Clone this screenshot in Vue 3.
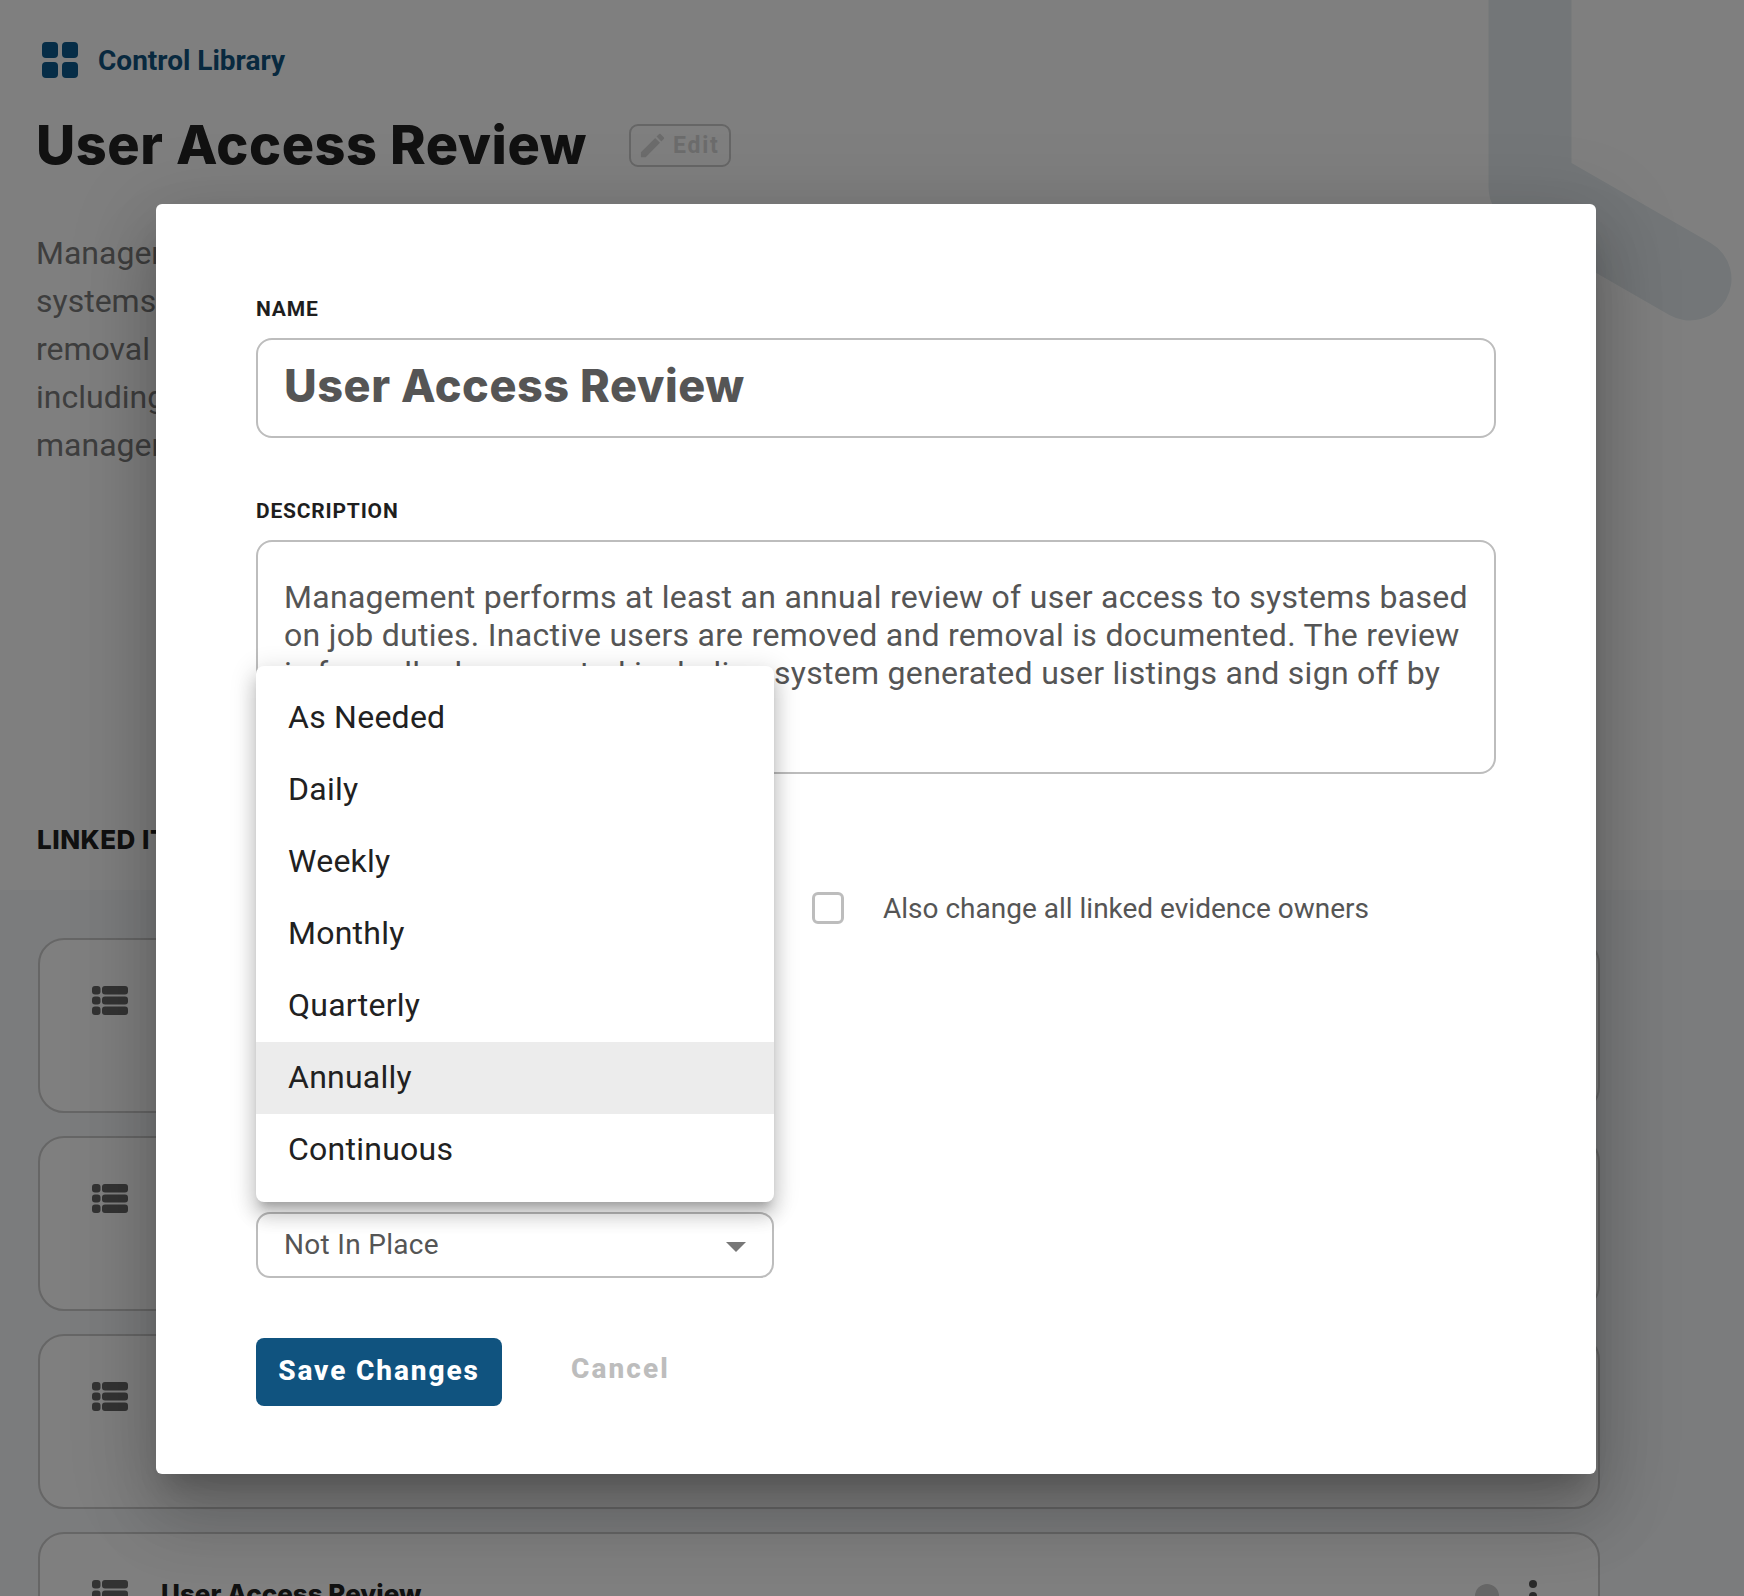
<script setup>
const descLines = ['Management performs at least an annual review of user access to', 'systems based on job duties.', 'removal is documented.', 'including system generated user listings.', 'management.']
const cards = [1, 2, 3, 4]
const options = ['As Needed', 'Daily', 'Weekly', 'Monthly', 'Quarterly', 'Annually', 'Continuous']
</script>

<template>
  <div class="page">
    <svg class="decor" width="1744" height="400" viewBox="0 0 1744 400">
      <polyline points="1530,-60 1530,187 1690,279" fill="none" stroke="#e6edf0" stroke-width="83" stroke-linecap="round" stroke-linejoin="round" />
    </svg>
    <header class="top">
      <div class="crumb">
        <div class="grid-icon"><i></i><i></i><i></i><i></i></div>
        <span>Control Library</span>
      </div>
      <div class="title-row">
        <h1>User Access Review</h1>
        <div class="edit">
          <svg width="31" height="31" viewBox="0 0 24 24"><path fill="currentColor" d="M3 17.25V21h3.75L17.81 9.94l-3.75-3.75L3 17.25zM20.71 7.04c.39-.39.39-1.02 0-1.41l-2.34-2.34c-.39-.39-1.02-.39-1.41 0l-1.83 1.83 3.75 3.75 1.83-1.83z" /></svg>
          <span>Edit</span>
        </div>
      </div>
      <div class="desc">
        <div v-for="line in descLines" :key="line">{{ line }}</div>
      </div>
      <div class="linked">LINKED ITEMS</div>
    </header>
    <section class="list">
      <div v-for="c in cards" :key="c" class="card">
        <svg class="list-icon" width="36" height="29" viewBox="0 0 36 29">
          <g fill="currentColor">
            <rect x="0" y="0" width="8.5" height="8.5" rx="3" />
            <rect x="0" y="10.5" width="8.5" height="8" rx="3" />
            <rect x="0" y="20.5" width="8.5" height="8.5" rx="3" />
            <rect x="10" y="0" width="26" height="8.5" rx="3" />
            <rect x="10" y="10.5" width="26" height="8" rx="3" />
            <rect x="10" y="20.5" width="26" height="8.5" rx="3" />
          </g>
        </svg>
        <div class="card-title">User Access Review</div>
        <div class="avatar"></div>
        <div class="dots"><i></i><i></i><i></i></div>
      </div>
    </section>

    <div class="overlay">
      <div class="modal">
        <div class="label">NAME</div>
        <div class="name-field">User Access Review</div>
        <div class="label label-desc">DESCRIPTION</div>
        <div class="desc-field">Management performs at least an annual review of user access to systems based on job duties. Inactive users are removed and removal is documented. The review is formally documented including system generated user listings and sign off by management.</div>
        <div class="check-row">
          <div class="check"></div>
          <span>Also change all linked evidence owners</span>
        </div>
        <div class="select">
          <span>Not In Place</span>
          <div class="caret"></div>
        </div>
        <div class="actions">
          <div class="save">Save Changes</div>
          <div class="cancel">Cancel</div>
        </div>
        <div class="menu">
          <div v-for="o in options" :key="o" class="opt" :class="{ active: o === 'Annually' }">{{ o }}</div>
        </div>
      </div>
    </div>
  </div>
</template>

<style>
html, body { margin: 0; padding: 0; background: #fff; }
</style>

<style scoped>
.page {
  position: relative;
  width: 1744px;
  height: 1596px;
  overflow: hidden;
  background: #fff;
  font-family: Roboto, "Liberation Sans", sans-serif;
}
.decor { position: absolute; left: 0; top: 0; }
.top {
  position: relative;
  height: 890px;
  box-sizing: border-box;
  padding: 42px 0 0 36px;
}
.crumb {
  display: flex;
  align-items: center;
  gap: 20px;
  margin-left: 6px;
  height: 36px;
  font-size: 28px;
  font-weight: 700;
  color: #10537f;
}
.grid-icon {
  display: grid;
  grid-template-columns: 16px 16px;
  grid-auto-rows: 16px;
  gap: 4px;
}
.grid-icon i { background: #0c5a8e; border-radius: 4px; }
.title-row {
  display: flex;
  align-items: center;
  margin-top: 37px;
  height: 60px;
}
h1 {
  margin: 0;
  font-family: Inter, Roboto, sans-serif;
  font-size: 54px;
  line-height: 60px;
  font-weight: 800;
  letter-spacing: 0.55px;
  color: #222;
  white-space: nowrap;
}
.edit {
  display: flex;
  align-items: center;
  box-sizing: border-box;
  width: 102px;
  height: 43px;
  margin-left: 42px;
  padding-left: 6px;
  gap: 5px;
  border: 2px solid #ccc;
  border-radius: 9px;
  color: #d8d8d8;
  font-size: 23px;
  font-weight: 700;
  letter-spacing: 1.8px;
}
.desc {
  margin-top: 54px;
  font-size: 32px;
  line-height: 48px;
  color: #7c7c7c;
  white-space: nowrap;
}
.linked {
  margin: 355px 0 0 1px;
  font-family: Inter, Roboto, sans-serif;
  font-size: 26px;
  line-height: 32px;
  font-weight: 800;
  letter-spacing: 0.5px;
  color: #222;
}
.list {
  height: 706px;
  box-sizing: border-box;
  padding: 48px 0 0 38px;
  background: #f6f8fa;
  display: flex;
  flex-direction: column;
  gap: 23px;
}
.card {
  display: flex;
  flex: none;
  align-items: flex-start;
  box-sizing: border-box;
  width: 1562px;
  height: 175px;
  padding: 46px 61px 0 52px;
  background: #fff;
  border: 2px solid #ccc;
  border-radius: 26px;
}
.list-icon { color: #666; flex: none; }
.card-title {
  margin: -1px 0 0 33px;
  font-family: Inter, Roboto, sans-serif;
  font-size: 26px;
  line-height: 30px;
  font-weight: 800;
  color: #222;
}
.avatar {
  width: 24px;
  height: 24px;
  margin: 4px 0 0 auto;
  border-radius: 50%;
  background: #ccc;
}
.dots {
  display: flex;
  flex-direction: column;
  gap: 4px;
  margin: 0 0 0 30px;
}
.dots i { width: 8px; height: 8px; border-radius: 50%; background: #555; }
.overlay {
  position: absolute;
  inset: 0;
  background: rgba(0, 0, 0, 0.5);
}
.modal {
  position: absolute;
  left: 156px;
  top: 204px;
  box-sizing: border-box;
  width: 1440px;
  height: 1270px;
  padding: 93px 100px 0;
  background: #fff;
  border-radius: 6px;
  box-shadow: 0 20px 27px -12px rgba(0,0,0,.2), 0 43px 68px 5px rgba(0,0,0,.14), 0 16px 82px 14px rgba(0,0,0,.12);
}
.label {
  font-size: 21px;
  line-height: 24px;
  font-weight: 700;
  letter-spacing: 0.8px;
  color: #1e1e1e;
}
.label-desc { margin-top: 61px; }
.name-field {
  box-sizing: border-box;
  height: 100px;
  margin-top: 17px;
  padding: 0 26px;
  border: 2px solid #bdbdbd;
  border-radius: 16px;
  font-family: Inter, Roboto, sans-serif;
  font-size: 45px;
  line-height: 92px;
  font-weight: 800;
  letter-spacing: 0.55px;
  color: #555;
}
.desc-field {
  box-sizing: border-box;
  height: 234px;
  margin-top: 17px;
  padding: 36px 12px 0 26px;
  border: 2px solid #bdbdbd;
  border-radius: 16px;
  font-size: 32px;
  line-height: 38px;
  letter-spacing: 0.29px;
  color: #555;
}
.check-row {
  display: flex;
  align-items: center;
  height: 32px;
  margin: 118px 0 0 556px;
  gap: 39px;
  font-size: 28px;
  color: #555;
}
.check {
  box-sizing: border-box;
  width: 32px;
  height: 32px;
  border: 3px solid #bdbdbd;
  border-radius: 6px;
}
.select {
  display: flex;
  align-items: center;
  justify-content: space-between;
  box-sizing: border-box;
  width: 518px;
  height: 66px;
  margin-top: 288px;
  padding: 0 26px 2px;
  border: 2px solid #bdbdbd;
  border-radius: 14px;
  font-size: 28px;
  letter-spacing: 0.3px;
  color: #555;
}
.caret {
  width: 0;
  height: 0;
  margin-top: 6px;
  border-left: 10px solid transparent;
  border-right: 10px solid transparent;
  border-top: 10px solid #777;
}
.actions {
  display: flex;
  align-items: flex-start;
  gap: 69px;
  margin-top: 60px;
}
.save {
  width: 246px;
  height: 68px;
  border-radius: 8px;
  background: #10537f;
  color: #fff;
  font-size: 28px;
  font-weight: 800;
  letter-spacing: 1.9px;
  line-height: 66px;
  text-align: center;
}
.cancel {
  margin-top: 13px;
  font-size: 28px;
  line-height: 36px;
  font-weight: 800;
  letter-spacing: 2.1px;
  color: #bdbdbd;
}
.menu {
  position: absolute;
  left: 100px;
  top: 462px;
  box-sizing: border-box;
  width: 518px;
  height: 536px;
  padding: 16px 0;
  background: #fff;
  border-radius: 8px;
  box-shadow: 0 9px 9px -5px rgba(0,0,0,.2), 0 14px 18px 2px rgba(0,0,0,.14), 0 5px 25px 4px rgba(0,0,0,.12);
}
.opt {
  height: 72px;
  padding-left: 32px;
  font-size: 32px;
  line-height: 70px;
  letter-spacing: 0.25px;
  color: #212121;
}
.opt.active { background: #ececec; }
</style>
